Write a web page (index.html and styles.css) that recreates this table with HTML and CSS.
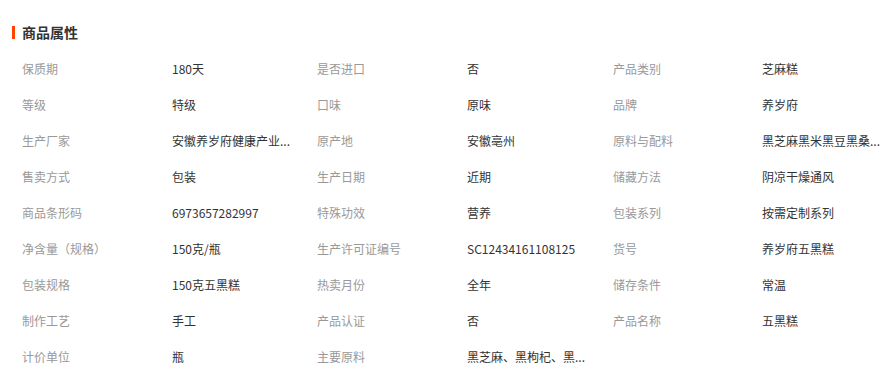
FILE: index.html
```html
<!DOCTYPE html>
<html lang="zh">
<head>
<meta charset="utf-8">
<link rel="stylesheet" href="styles.css">
</head>
<body>
<div class="attrs">
  <h3 class="title"><span class="bar"></span>商品属性</h3>
  <div class="grid">
    <div class="k">保质期</div><div class="v">180天</div>
    <div class="k">是否进口</div><div class="v">否</div>
    <div class="k">产品类别</div><div class="v">芝麻糕</div>

    <div class="k">等级</div><div class="v">特级</div>
    <div class="k">口味</div><div class="v">原味</div>
    <div class="k">品牌</div><div class="v">养岁府</div>

    <div class="k">生产厂家</div><div class="v">安徽养岁府健康产业...</div>
    <div class="k">原产地</div><div class="v">安徽亳州</div>
    <div class="k">原料与配料</div><div class="v">黑芝麻黑米黑豆黑桑...</div>

    <div class="k">售卖方式</div><div class="v">包装</div>
    <div class="k">生产日期</div><div class="v">近期</div>
    <div class="k">储藏方法</div><div class="v">阴凉干燥通风</div>

    <div class="k">商品条形码</div><div class="v">6973657282997</div>
    <div class="k">特殊功效</div><div class="v">营养</div>
    <div class="k">包装系列</div><div class="v">按需定制系列</div>

    <div class="k">净含量（规格）</div><div class="v">150克/瓶</div>
    <div class="k">生产许可证编号</div><div class="v">SC12434161108125</div>
    <div class="k">货号</div><div class="v">养岁府五黑糕</div>

    <div class="k">包装规格</div><div class="v">150克五黑糕</div>
    <div class="k">热卖月份</div><div class="v">全年</div>
    <div class="k">储存条件</div><div class="v">常温</div>

    <div class="k">制作工艺</div><div class="v">手工</div>
    <div class="k">产品认证</div><div class="v">否</div>
    <div class="k">产品名称</div><div class="v">五黑糕</div>

    <div class="k">计价单位</div><div class="v">瓶</div>
    <div class="k">主要原料</div><div class="v">黑芝麻、黑枸杞、黑...</div>
  </div>
</div>
</body>
</html>
```

FILE: styles.css
```css
* { box-sizing: border-box; }
body {
  margin: 0;
  background: #fff;
  font-family: "Noto Sans CJK SC", "Noto Sans", sans-serif;
  font-size: 12px;
}
.attrs {
  padding: 17px 0 0 12px;
}
.title {
  margin: 0;
  display: flex;
  align-items: center;
  gap: 7px;
  height: 30px;
  font-size: 14px;
  font-weight: bold;
  color: #333;
}
.bar {
  width: 3px;
  height: 13px;
  background: #ff4400;
}
.grid {
  display: grid;
  grid-template-columns: 150px 145px 150px 146px 149px 1fr;
  grid-auto-rows: 36px;
  padding-left: 10px;
  padding-top: 3px;
}
.k, .v {
  display: flex;
  align-items: center;
  white-space: nowrap;
}
.k { color: #999; }
.v { color: #333; }
```
